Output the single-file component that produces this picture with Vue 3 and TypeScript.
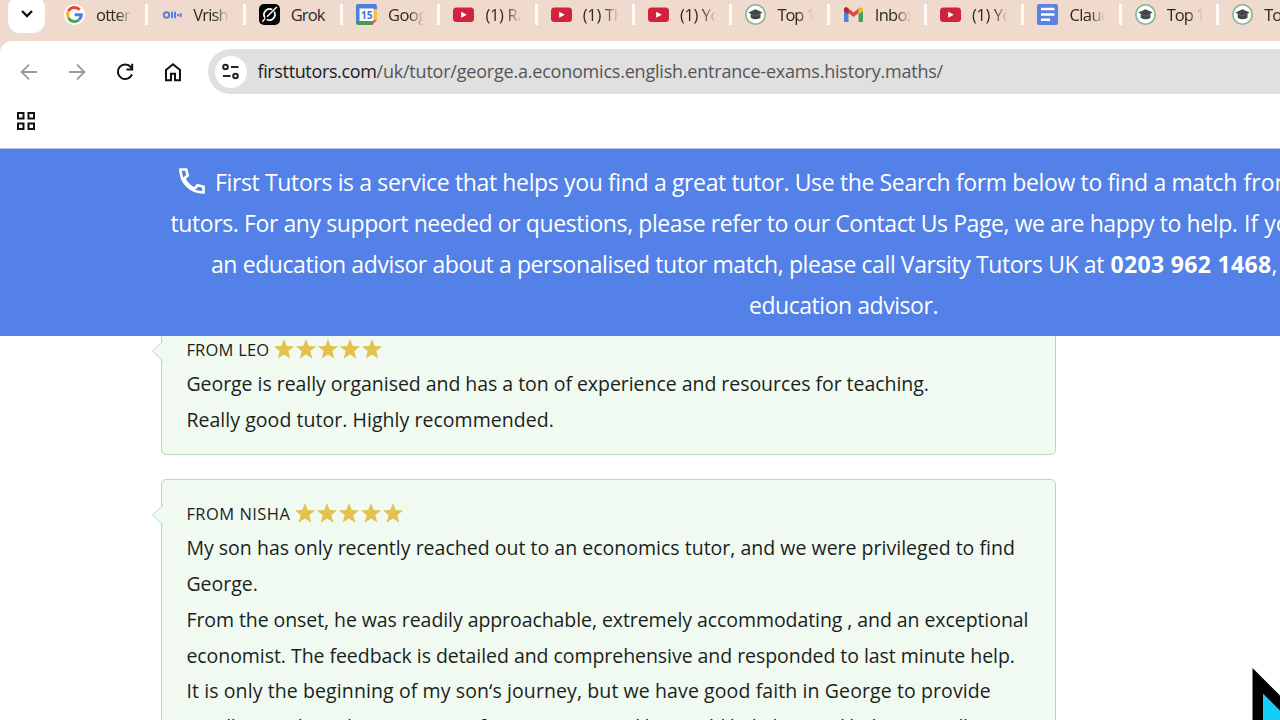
<script setup lang="ts">
type Tab = { icon: string; title: string; width: number; whole?: boolean }

const tabs: Tab[] = [
  { icon: 'google', title: 'otter', width: 34 },
  { icon: 'otter', title: 'Vrish', width: 34.5 },
  { icon: 'grok', title: 'Grok', width: 34, whole: true },
  { icon: 'calendar', title: 'Goog', width: 38.5 },
  { icon: 'youtube', title: '(1) Ra', width: 41 },
  { icon: 'youtube', title: '(1) Th', width: 41 },
  { icon: 'youtube', title: '(1) Yo', width: 40 },
  { icon: 'tutors', title: 'Top 1', width: 37.5 },
  { icon: 'gmail', title: 'Inbox', width: 40 },
  { icon: 'youtube', title: '(1) Yo', width: 40 },
  { icon: 'docs', title: 'Claud', width: 41 },
  { icon: 'tutors', title: 'Top 1', width: 37.5 },
  { icon: 'tutors', title: 'Top 1', width: 37.5 },
]

type Line = { text: string; width: number }
type Review = { name: string; nameWidth: number; lines: Line[] }

const reviews: Review[] = [
  {
    name: 'FROM LEO',
    nameWidth: 83,
    lines: [
      { text: 'George is really organised and has a ton of experience and resources for teaching.', width: 742.5 },
      { text: 'Really good tutor. Highly recommended.', width: 367.5 },
    ],
  },
  {
    name: 'FROM NISHA',
    nameWidth: 104,
    lines: [
      { text: 'My son has only recently reached out to an economics tutor, and we were privileged to find', width: 828.5 },
      { text: 'George.', width: 71.5 },
      { text: 'From the onset, he was readily approachable, extremely accommodating , and an exceptional', width: 842 },
      { text: 'economist. The feedback is detailed and comprehensive and responded to last minute help.', width: 828.5 },
      { text: 'It is only the beginning of my son‘s journey, but we have good faith in George to provide', width: 804.5 },
      { text: 'excellent and good examinations for our exams and he would help him and led on so well too!', width: 820 },
    ],
  },
]

// Spreads letter spacing so the text occupies the given width.
const vFit = {
  mounted(el: HTMLElement, binding: { value: number }) {
    const count = (el.textContent ?? '').length
    const natural = el.getBoundingClientRect().width
    if (count) el.style.letterSpacing = `${(binding.value - natural) / count}px`
  },
}
</script>

<template>
  <div class="screen">
    <header class="tabstrip">
      <div class="tab-search">
        <svg width="14" height="10" viewBox="0 0 14 10"><path d="M2 2l5 5 5-5" fill="none" stroke="#111" stroke-width="2.3" /></svg>
      </div>
      <div v-for="(tab, i) in tabs" :key="i" class="tab">
        <svg v-if="tab.icon === 'google'" class="icon" viewBox="0 0 21 21">
          <circle cx="10.5" cy="10.5" r="10.5" fill="#fff" />
          <g fill="none" stroke-width="3.1">
            <path d="M15.7 5.8A7 7 0 0 0 4.4 7.1" stroke="#e4483c" />
            <path d="M4.4 7.1a7 7 0 0 0 0 6.8" stroke="#f2b92c" />
            <path d="M4.4 13.9a7 7 0 0 0 10.5 2" stroke="#45a85a" />
            <path d="M14.9 15.9a7 7 0 0 0 2.4-5.1H10.7" stroke="#4a7fe5" />
          </g>
        </svg>
        <svg v-else-if="tab.icon === 'otter'" class="icon" viewBox="0 0 21 21">
          <g fill="none" stroke="#5b7fe0" stroke-width="2" stroke-linecap="round">
            <circle cx="5.500" cy="11" r="2.7" />
            <path d="M11 8.4v5.2M14 8.4v5.2M17 10.8v.6M19.700 10v2.3" />
          </g>
        </svg>
        <svg v-else-if="tab.icon === 'grok'" class="icon" viewBox="0 0 21 21">
          <rect width="21" height="21" rx="5" fill="#050505" />
          <g fill="none" stroke="#fff" stroke-width="1.7">
            <path d="M13.2 5.6a5.7 5.7 0 0 0-7.3 8.2M15.2 7.6a5.7 5.7 0 0 1-7.5 7.9" />
            <path d="M8 12.7L17.8 3M3.4 17.8l2.7-3.4" stroke-width="1.4" />
          </g>
        </svg>
        <svg v-else-if="tab.icon === 'calendar'" class="icon" viewBox="0 0 21 21">
          <path d="M2 0h17a2 2 0 0 1 2 2v3H0V2a2 2 0 0 1 2-2z" fill="#4e80dc" />
          <path d="M0 4h5v13H0z" fill="#4e80dc" />
          <path d="M16 5h5v11h-5z" fill="#f0c13f" />
          <path d="M0 17h17v4H2a2 2 0 0 1-2-2z" fill="#46995b" />
          <path d="M16 16h5l-5 5z" fill="#d9534c" />
          <path d="M3.5 4.5H17.5V17H3.5z" fill="#fff" />
          <text x="10.7" y="15" text-anchor="middle" class="day">15</text>
        </svg>
        <svg v-else-if="tab.icon === 'youtube'" class="icon" viewBox="0 0 21 21">
          <rect y="3.5" width="21" height="14.5" rx="3.5" fill="#d3223e" />
          <path d="M8.2 7.7l5.6 3-5.6 3z" fill="#fff" />
        </svg>
        <svg v-else-if="tab.icon === 'tutors'" class="icon" viewBox="0 0 21 21">
          <circle cx="10.5" cy="10.5" r="9.7" fill="#fff" stroke="#83b692" stroke-width="1.6" />
          <path d="M10.5 5.3l7.2 3.1-2.2 1.2v4.1q-5 3-9.8 0V9.8L3.3 8.5z" fill="#444749" />
          <path d="M5.7 10.2l4.8 1.8 4.9-2" fill="none" stroke="#777" stroke-width=".6" />
        </svg>
        <svg v-else-if="tab.icon === 'gmail'" class="icon" viewBox="0 0 21 21">
          <path d="M1 5.5L5.5 8v10H2.3A1.3 1.3 0 0 1 1 16.7z" fill="#4c82df" />
          <path d="M20 5.5L15.5 8v10h3.2a1.3 1.3 0 0 0 1.3-1.3z" fill="#42a05a" />
          <path d="M1 5.5a2.2 2.2 0 0 1 3.5-1.7l6 4.6 6-4.6L15.5 9l-5 4-5-4L1 7z" fill="#d94a3e" />
          <path d="M15.5 5l1-1.2A2.2 2.2 0 0 1 20 5.5v2L15.5 10z" fill="#edbd35" />
          <path d="M1 5.5a2.2 2.2 0 0 1 3.5-1.7l1 .9V10L1 7.5z" fill="#a92c31" />
        </svg>
        <svg v-else class="icon" viewBox="0 0 21 21">
          <rect width="21" height="21" rx="2" fill="#5b82de" />
          <path d="M4 5h13.5M4 10.5h13.5M4 15.7h9" stroke="#fff" stroke-width="2.4" />
        </svg>
        <span class="tab-title" :class="{ faded: !tab.whole }"><span v-fit="tab.width" class="fit">{{ tab.title }}</span></span>
      </div>
    </header>

    <nav class="toolbar">
      <svg class="nav muted" viewBox="0 0 20 20"><path d="M18 10H3M10 2.6L2.6 10l7.4 7.4" /></svg>
      <svg class="nav muted" viewBox="0 0 20 20"><path d="M2 10h15M10 2.6l7.4 7.4-7.4 7.4" /></svg>
      <svg class="nav" viewBox="0 0 20 20"><path d="M17 12.4A7.300 7.300 0 1 1 15.900 5.200L17 7M17.200 1.800v5.700h-5.700" /></svg>
      <svg class="nav" viewBox="0 0 20 20"><path d="M3 18.2V7.9l7-5.6 7 5.6v10.3h-5v-6.500H8v6.500z" /></svg>
      <div class="address">
        <span class="site-info">
          <svg width="18" height="18" viewBox="0 0 18 18" fill="none" stroke="#222" stroke-width="2">
            <circle cx="3.500" cy="4" r="2.3" /><path d="M9 4h7.500M1 13H8.500" /><circle cx="13.500" cy="13" r="2.3" />
          </svg>
        </span>
        <span class="url"><span v-fit="119" class="fit host">firsttutors.com</span><span v-fit="566.5" class="fit">/uk/tutor/george.a.economics.english.entrance-exams.history.maths/</span></span>
      </div>
    </nav>

    <div class="bookmarks">
      <svg width="20" height="20" viewBox="0 0 20 20" fill="none" stroke="#111" stroke-width="2">
        <path d="M2 2h5.5v5.5H2zM12.5 2H18v5.5h-5.5zM2 12.5h5.5V18H2zM12.5 12.5H18V18h-5.5z" />
      </svg>
    </div>

    <section class="banner">
      <p class="row first">
        <svg class="phone" viewBox="0 0 26 26"><path d="M1.5 1.5h5.7l1.5 6-3.5 3.1q3.4 6.8 10.2 10.2l3.1-3.5 6 1.5v5.7C11.5 24.5 1.5 14.5 1.5 1.5z" /></svg>
        <span v-fit="1022" class="fit">First Tutors is a service that helps you find a great tutor. Use the Search form below to find a match</span>
        <span class="fit tail">from our</span>
      </p>
      <p class="row second">
        <span v-fit="1067" class="fit">tutors. For any support needed or questions, please refer to our Contact Us Page, we are happy to help.</span>
        <span class="fit tail">If you</span>
      </p>
      <p class="row third">
        <span v-fit="893" class="fit">an education advisor about a personalised tutor match, please call Varsity Tutors UK at</span>
        <strong v-fit="161" class="fit tail">0203 962 1468</strong><span class="fit">,</span>
      </p>
      <p class="row fourth"><span v-fit="189" class="fit">education advisor.</span></p>
    </section>

    <main class="reviews">
      <article v-for="review in reviews" :key="review.name" class="review">
        <svg class="pointer" viewBox="0 0 12 22"><path d="M12 1L1.5 11l10.5 10" /></svg>
        <div class="from">
          <span v-fit="review.nameWidth" class="fit">{{ review.name }}</span>
          <span class="stars">
            <svg v-for="n in 5" :key="n" viewBox="0 0 22 22"><path d="M11 0l2.700 7 7.400.4-5.800 4.700 2 7.300L11 15.400l-6.300 4 2-7.300L.9 7.400l7.400-.4z" fill="#e2c14e" /></svg>
          </span>
        </div>
        <p v-for="line in review.lines" :key="line.text"><span v-fit="line.width" class="fit">{{ line.text }}</span></p>
      </article>
    </main>

    <svg class="cursor" viewBox="0 0 28 52"><path d="M.5 0l52 52H.5z" fill="#000" /><path d="M11 25.5L38.500 53H11z" fill="#16cdfa" /></svg>
  </div>
</template>

<style>
body { overflow: hidden; }
</style>

<style scoped>
.screen {
  position: relative;
  display: flex;
  flex-direction: column;
  width: 1280px;
  height: 720px;
  overflow: hidden;
  background: #fff;
  font-family: "Open Sans", "Noto Sans", sans-serif;
}
p { margin: 0; }
.fit { display: inline-block; white-space: nowrap; }

.tabstrip {
  flex: none;
  display: flex;
  height: 53px;
  margin-bottom: -12px;
  background: #f0dacd;
}
.tab-search {
  flex: none;
  display: flex;
  justify-content: center;
  align-items: center;
  width: 37px;
  height: 37px;
  margin: -4px 6px 0 8px;
  border-radius: 12px;
  background: #fff;
}
.tab-search svg { margin-top: -2px; }
.tab {
  flex: none;
  box-sizing: border-box;
  display: flex;
  gap: 11px;
  width: 97.35px;
  height: 21px;
  margin-top: 3.5px;
  padding-left: 13px;
  border-right: 3px solid #fdfaf8;
}
.icon { flex: none; width: 21px; height: 21px; }
.day { font: bold 10px "Open Sans", sans-serif; fill: #3c6fcf; }
.tab-title {
  flex: none;
  width: 36px;
  height: 30px;
  margin-top: -3.5px;
  overflow: hidden;
  font-size: 16.5px;
  line-height: 29px;
  color: #2d2926;
}
.faded {
  -webkit-mask-image: linear-gradient(90deg, #000 58%, transparent 100%);
  mask-image: linear-gradient(90deg, #000 58%, transparent 100%);
}

.toolbar {
  flex: none;
  display: flex;
  align-items: center;
  gap: 28px;
  box-sizing: border-box;
  height: 61px;
  padding-left: 19px;
  border-top-left-radius: 12px;
  background: #fff;
}
.nav { flex: none; width: 20px; height: 20px; fill: none; stroke: #111; stroke-width: 2; }
.muted { stroke: #9a9a9a; stroke-width: 1.8; }
.address {
  flex: 1;
  display: flex;
  align-items: center;
  height: 45px;
  margin-left: -3px;
  padding-left: 7px;
  border-radius: 23px 0 0 23px;
  background: #e0e0e0;
}
.site-info {
  display: flex;
  align-items: center;
  justify-content: center;
  width: 32px;
  height: 32px;
  margin-right: 10.5px;
  border-radius: 50%;
  background: #fff;
}
.url { margin-top: -1px; font-size: 18px; line-height: 30px; color: #555; white-space: nowrap; }
.host { color: #1c1c1c; }

.bookmarks {
  flex: none;
  display: flex;
  box-sizing: border-box;
  height: 46px;
  padding: 8.5px 0 0 16.4px;
}

.banner {
  position: relative;
  z-index: 1;
  flex: none;
  box-sizing: border-box;
  height: 188.4px;
  padding-top: 12.5px;
  border-top: 1px solid #b9c5e5;
  background: #5381e7;
  color: #fff;
  font-size: 23px;
  overflow: hidden;
}
.row { display: flex; height: 41px; line-height: 41px; }
.first { padding-left: 179px; }
.second { padding-left: 170.5px; }
.third { padding-left: 211px; }
.fourth { padding-left: 749px; }
.tail { margin-left: 6.5px; }
.phone {
  flex: none;
  width: 26px;
  height: 26px;
  margin: 6px 10px 0 0;
  fill: none;
  stroke: #fff;
  stroke-width: 2.7;
}

.reviews {
  flex: none;
  display: flex;
  flex-direction: column;
  gap: 24px;
  width: 895px;
  margin: -21.4px 0 0 161px;
}
.review {
  position: relative;
  box-sizing: border-box;
  padding: 17.9px 24px 16.3px 24.4px;
  border: 1px solid #b5dabb;
  border-radius: 5px;
  background: #f0faf1;
  color: #1b1f1c;
  font-size: 19.5px;
  line-height: 35.9px;
}
.review p { height: 35.9px; }
.from { display: flex; height: 32px; line-height: 32px; font-size: 16.5px; }
.stars { display: flex; align-items: center; margin-left: 3.5px; }
.stars svg { width: 22px; height: 22px; }
.pointer {
  position: absolute;
  left: -11px;
  top: 24px;
  width: 12px;
  height: 22px;
  fill: #f0faf1;
  stroke: #b5dabb;
}
.cursor { position: absolute; left: 1252px; top: 668px; width: 28px; height: 52px; }
</style>
